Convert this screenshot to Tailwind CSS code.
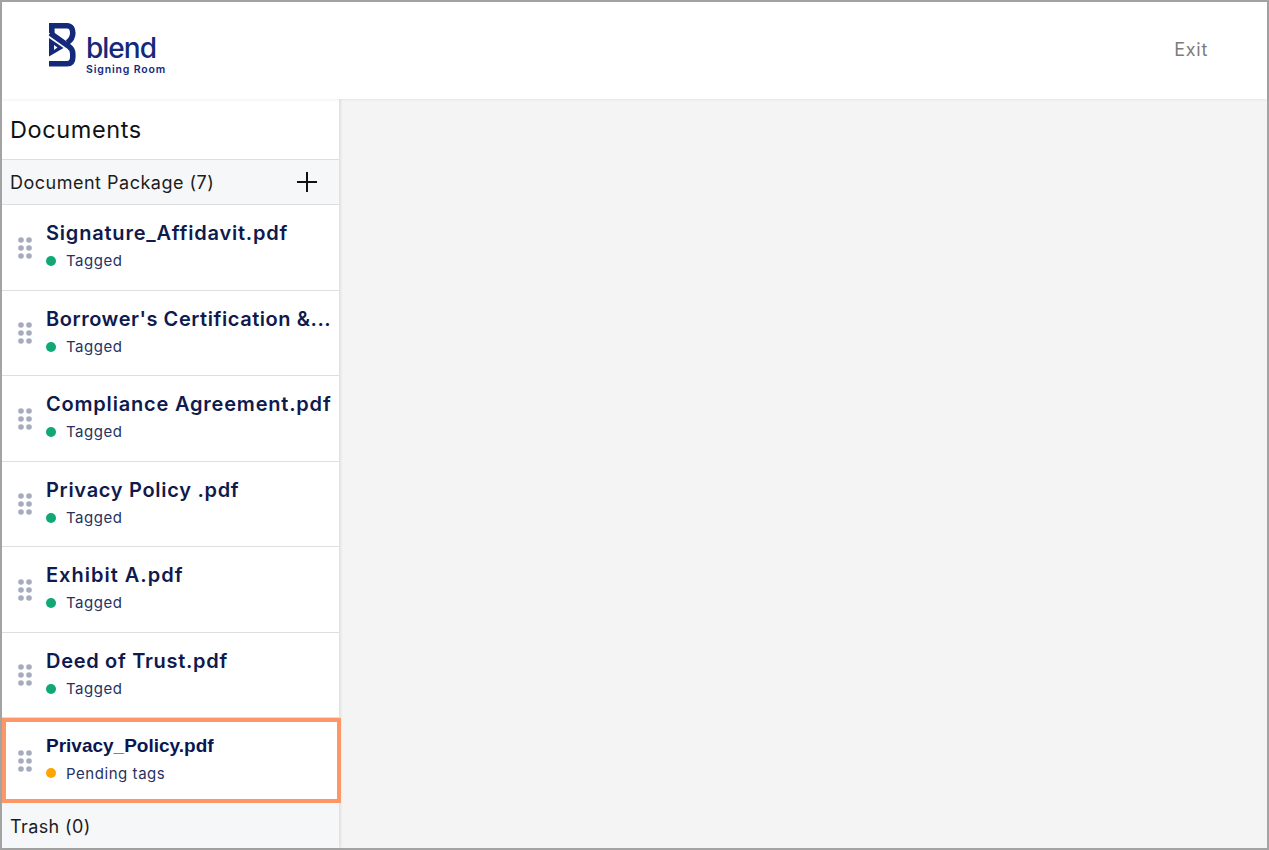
<!DOCTYPE html>
<html lang="en">
<head>
    <meta charset="UTF-8" />
    <title>Signing Room</title>
    <script src="https://cdn.jsdelivr.net/npm/@tailwindcss/browser@4"></script>
</head>
<body class="h-screen overflow-hidden bg-white font-['Inter',sans-serif]">
<div class="h-[850px] flex flex-col border-2 border-[#a3a3a3]">
    <!-- Top bar -->
    <header class="h-[97px] shrink-0 relative z-10 bg-white flex items-center justify-between shadow-[0_1px_3px_rgba(0,0,0,0.06)]">
        <div class="flex items-start ml-[47px] mt-[-3px]">
            <svg width="27" height="44" viewBox="0 0 27 44" fill="none" class="shrink-0">
                <path d="M2.800 10V2.800H18C22.500 2.800 23.800 6.500 23.800 10C23.800 14 22 17 18.500 19.500" stroke="#14297a" stroke-width="5.600"/>
                <path d="M1 10L20 23.500C23 25.500 23.800 28 23.800 31V34C23.800 38.500 22 40.700 18 40.700H0" stroke="#14297a" stroke-width="5.600"/>
                <path d="M0 15L14.500 25L0 33.500Z" fill="#14297a"/>
                <path d="M5 22L8.500 24.500L5 27Z" fill="#fff"/>
            </svg>
            <div class="ml-[10px] mt-[10px] text-[#14297a]">
                <div class="text-[28px] leading-[30px] font-medium tracking-[-1px]">blend</div>
                <div class="text-[10.500px] leading-[12px] font-semibold tracking-[0.85px] mt-[1px]">Signing Room</div>
            </div>
        </div>
        <a href="#" class="mr-[59px] mt-[-2px] text-[18px] tracking-[0.7px] text-[#7c7c7c]">Exit</a>
    </header>

    <div class="flex-1 flex min-h-0 bg-[#f4f4f4]">
        <!-- Document list -->
        <aside class="w-[337px] shrink-0 flex flex-col bg-white shadow-[2px_0_2px_rgba(0,0,0,0.08)]">
            <h1 class="h-[60px] shrink-0 flex items-center pl-[8px] pt-[2px] text-[23.500px] text-[#111] tracking-[0.6px]">Documents</h1>

            <div class="h-[46px] shrink-0 flex items-center justify-between pl-[8px] pr-[21px] bg-[#f6f7f9] border-y border-[#dedede] text-[18px] text-[#1c1c1c] tracking-[0.5px]">
                <span>Document Package (7)</span>
                <svg width="22" height="22" viewBox="0 0 22 22" fill="none" stroke="#111" stroke-width="2"><path d="M11 1V21M1 11H21"/></svg>
            </div>

            <div class="h-[85.500px] shrink-0 flex items-center border-b border-[#dedede]">
                <svg width="14" height="22" viewBox="0 0 14 22" fill="#a6abbd" class="ml-[16px] shrink-0 mt-[1px]"><circle cx="3" cy="3" r="2.800"/><circle cx="11" cy="3" r="2.800"/><circle cx="3" cy="11" r="2.800"/><circle cx="11" cy="11" r="2.800"/><circle cx="3" cy="19" r="2.800"/><circle cx="11" cy="19" r="2.800"/></svg>
                <div class="ml-[14px] min-w-0 pb-[4px]">
                    <div class="text-[20px] leading-[26px] font-semibold text-[#0f1a4d] tracking-[0.8px] whitespace-nowrap">Signature_Affidavit.pdf</div>
                    <div class="flex items-center mt-[5px] text-[15px] leading-[20px] tracking-[0.5px] text-[#27325f]"><span class="w-[10px] h-[10px] rounded-full bg-[#0fa876] mr-[10px]"></span>Tagged</div>
                </div>
            </div>
            <div class="h-[85.500px] shrink-0 flex items-center border-b border-[#dedede]">
                <svg width="14" height="22" viewBox="0 0 14 22" fill="#a6abbd" class="ml-[16px] shrink-0 mt-[1px]"><circle cx="3" cy="3" r="2.800"/><circle cx="11" cy="3" r="2.800"/><circle cx="3" cy="11" r="2.800"/><circle cx="11" cy="11" r="2.800"/><circle cx="3" cy="19" r="2.800"/><circle cx="11" cy="19" r="2.800"/></svg>
                <div class="ml-[14px] min-w-0 pb-[3px]">
                    <div class="text-[20px] leading-[26px] font-semibold text-[#0f1a4d] tracking-[0.55px] whitespace-nowrap">Borrower's Certification &amp;...</div>
                    <div class="flex items-center mt-[5px] text-[15px] leading-[20px] tracking-[0.5px] text-[#27325f]"><span class="w-[10px] h-[10px] rounded-full bg-[#0fa876] mr-[10px]"></span>Tagged</div>
                </div>
            </div>
            <div class="h-[85.500px] shrink-0 flex items-center border-b border-[#dedede]">
                <svg width="14" height="22" viewBox="0 0 14 22" fill="#a6abbd" class="ml-[16px] shrink-0 mt-[1px]"><circle cx="3" cy="3" r="2.800"/><circle cx="11" cy="3" r="2.800"/><circle cx="3" cy="11" r="2.800"/><circle cx="11" cy="11" r="2.800"/><circle cx="3" cy="19" r="2.800"/><circle cx="11" cy="19" r="2.800"/></svg>
                <div class="ml-[14px] min-w-0 pb-[4px]">
                    <div class="text-[20px] leading-[26px] font-semibold text-[#0f1a4d] tracking-[0.8px] whitespace-nowrap">Compliance Agreement.pdf</div>
                    <div class="flex items-center mt-[5px] text-[15px] leading-[20px] tracking-[0.5px] text-[#27325f]"><span class="w-[10px] h-[10px] rounded-full bg-[#0fa876] mr-[10px]"></span>Tagged</div>
                </div>
            </div>
            <div class="h-[85.500px] shrink-0 flex items-center border-b border-[#dedede]">
                <svg width="14" height="22" viewBox="0 0 14 22" fill="#a6abbd" class="ml-[16px] shrink-0 mt-[1px]"><circle cx="3" cy="3" r="2.800"/><circle cx="11" cy="3" r="2.800"/><circle cx="3" cy="11" r="2.800"/><circle cx="11" cy="11" r="2.800"/><circle cx="3" cy="19" r="2.800"/><circle cx="11" cy="19" r="2.800"/></svg>
                <div class="ml-[14px] min-w-0 pb-[3px]">
                    <div class="text-[20px] leading-[26px] font-semibold text-[#0f1a4d] tracking-[0.7px] whitespace-nowrap">Privacy Policy .pdf</div>
                    <div class="flex items-center mt-[5px] text-[15px] leading-[20px] tracking-[0.5px] text-[#27325f]"><span class="w-[10px] h-[10px] rounded-full bg-[#0fa876] mr-[10px]"></span>Tagged</div>
                </div>
            </div>
            <div class="h-[85.500px] shrink-0 flex items-center border-b border-[#dedede]">
                <svg width="14" height="22" viewBox="0 0 14 22" fill="#a6abbd" class="ml-[16px] shrink-0 mt-[1px]"><circle cx="3" cy="3" r="2.800"/><circle cx="11" cy="3" r="2.800"/><circle cx="3" cy="11" r="2.800"/><circle cx="11" cy="11" r="2.800"/><circle cx="3" cy="19" r="2.800"/><circle cx="11" cy="19" r="2.800"/></svg>
                <div class="ml-[14px] min-w-0 pb-[4px]">
                    <div class="text-[20px] leading-[26px] font-semibold text-[#0f1a4d] tracking-[1px] whitespace-nowrap">Exhibit A.pdf</div>
                    <div class="flex items-center mt-[5px] text-[15px] leading-[20px] tracking-[0.5px] text-[#27325f]"><span class="w-[10px] h-[10px] rounded-full bg-[#0fa876] mr-[10px]"></span>Tagged</div>
                </div>
            </div>
            <div class="h-[85.500px] shrink-0 flex items-center border-b border-[#dedede]">
                <svg width="14" height="22" viewBox="0 0 14 22" fill="#a6abbd" class="ml-[16px] shrink-0 mt-[1px]"><circle cx="3" cy="3" r="2.800"/><circle cx="11" cy="3" r="2.800"/><circle cx="3" cy="11" r="2.800"/><circle cx="11" cy="11" r="2.800"/><circle cx="3" cy="19" r="2.800"/><circle cx="11" cy="19" r="2.800"/></svg>
                <div class="ml-[14px] min-w-0 pb-[3px]">
                    <div class="text-[20px] leading-[26px] font-semibold text-[#0f1a4d] tracking-[0.7px] whitespace-nowrap">Deed of Trust.pdf</div>
                    <div class="flex items-center mt-[5px] text-[15px] leading-[20px] tracking-[0.5px] text-[#27325f]"><span class="w-[10px] h-[10px] rounded-full bg-[#0fa876] mr-[10px]"></span>Tagged</div>
                </div>
            </div>

            <!-- Selected document -->
            <div class="h-[85px] w-[339px] shrink-0 flex items-center border-[4px] border-[#fd9767] bg-white">
                <svg width="14" height="22" viewBox="0 0 14 22" fill="#a6abbd" class="ml-[12px] shrink-0"><circle cx="3" cy="3" r="2.800"/><circle cx="11" cy="3" r="2.800"/><circle cx="3" cy="11" r="2.800"/><circle cx="11" cy="11" r="2.800"/><circle cx="3" cy="19" r="2.800"/><circle cx="11" cy="19" r="2.800"/></svg>
                <div class="ml-[14px] min-w-0 pb-[4px]">
                    <div class="font-['Liberation_Sans',sans-serif] text-[19px] leading-[26px] font-bold text-[#0b1650] whitespace-nowrap">Privacy_Policy.pdf</div>
                    <div class="flex items-center mt-[5px] text-[15px] leading-[20px] tracking-[0.55px] text-[#27325f]"><span class="w-[10px] h-[10px] rounded-full bg-[#ffa400] mr-[10px] mt-[-3px]"></span>Pending tags</div>
                </div>
            </div>

            <div class="flex-1 flex items-center pl-[8px] pt-[2px] bg-[#f6f7f9] text-[18px] text-[#1c1c1c] tracking-[0.4px]">Trash (0)</div>
        </aside>
        <main class="flex-1"></main>
    </div>
</div>
</body>
</html>
